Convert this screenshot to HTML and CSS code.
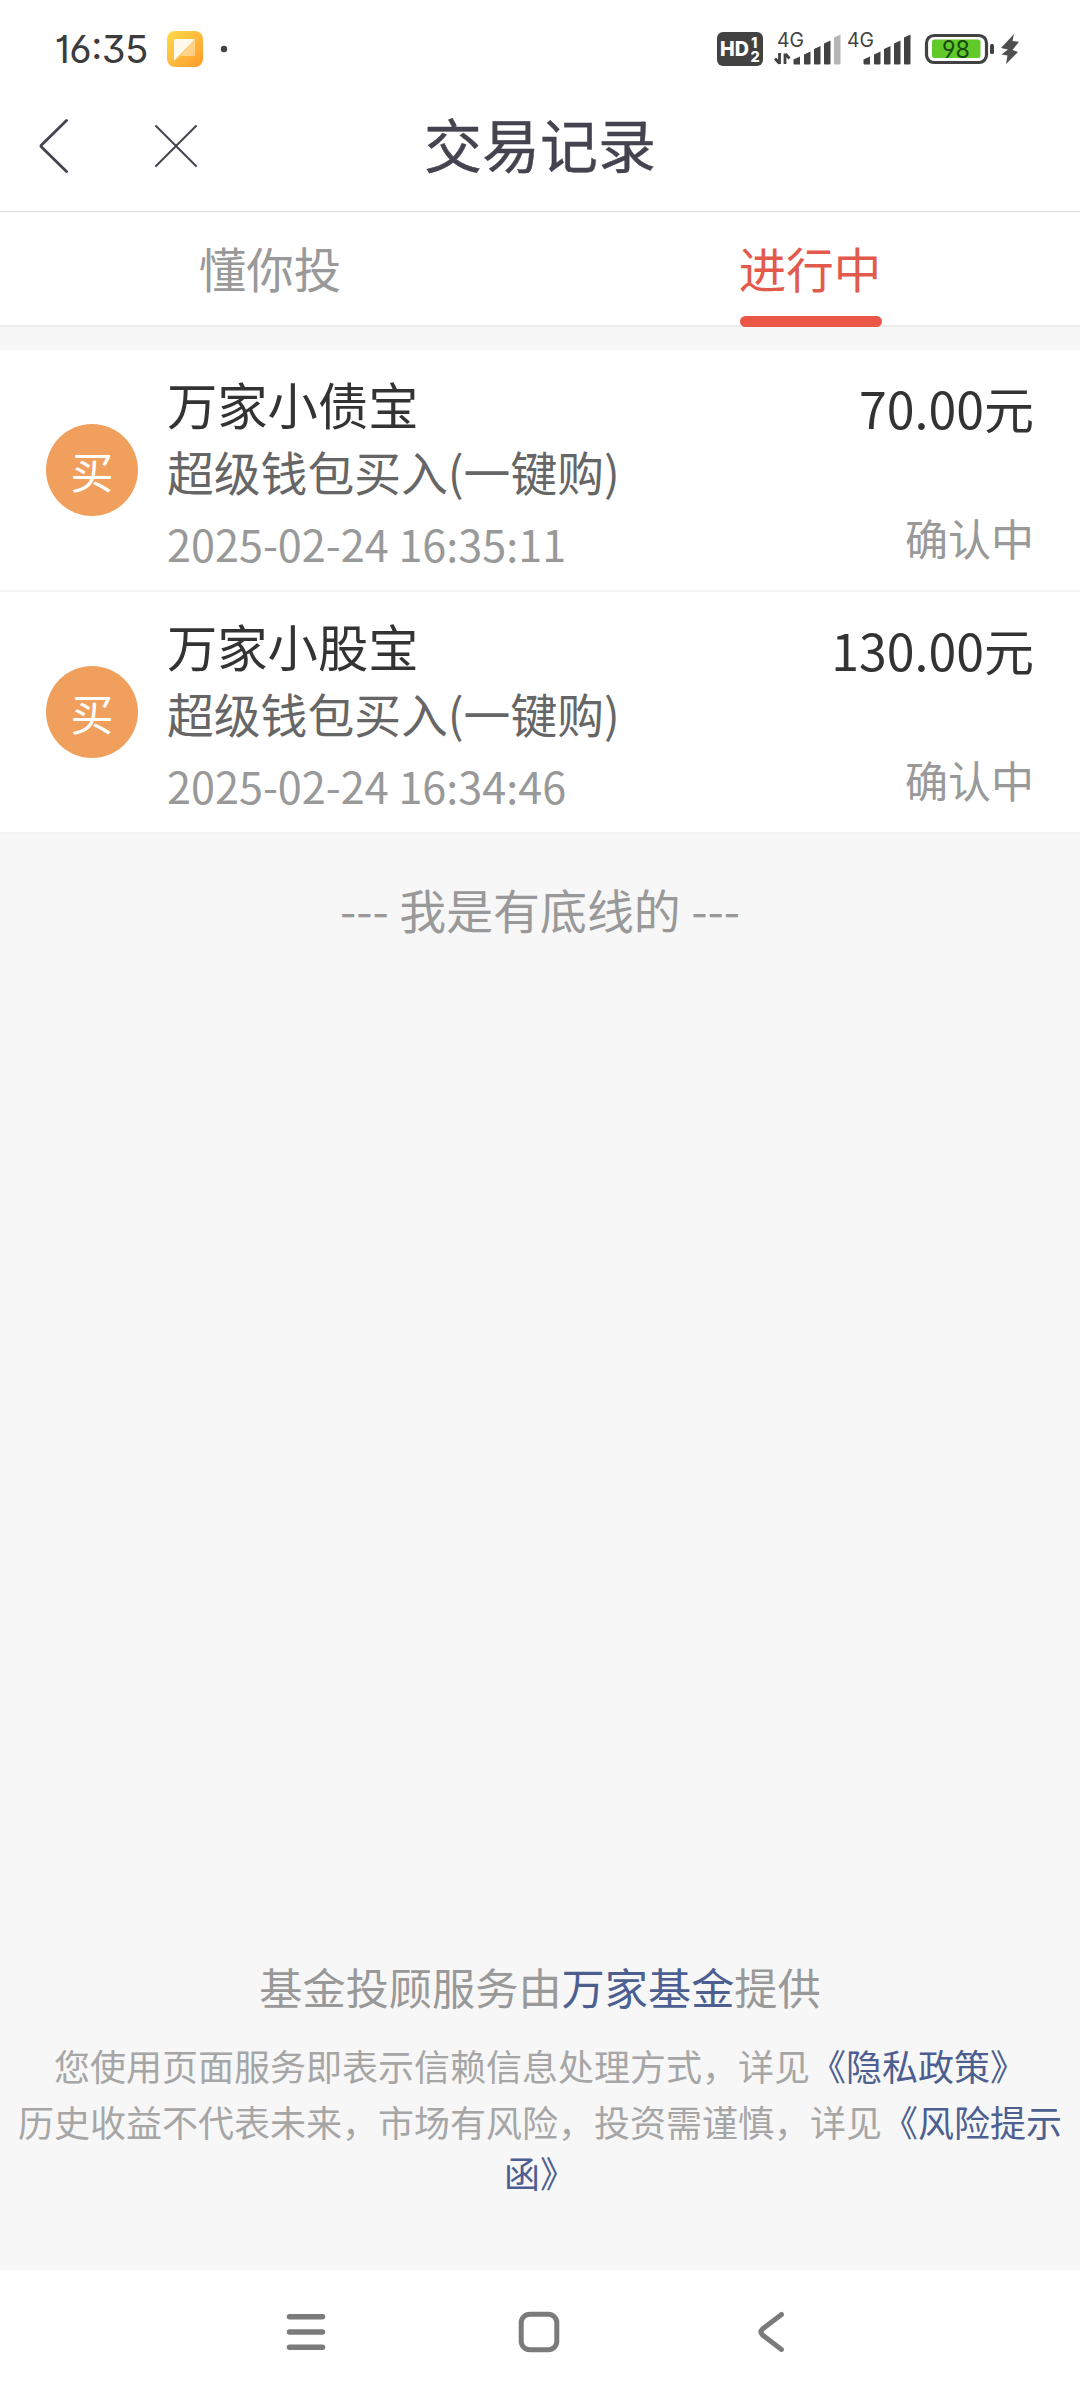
FILE: index.html
```html
<!DOCTYPE html>
<html lang="zh-CN">
<head>
<meta charset="utf-8">
<title>交易记录</title>
<link rel="stylesheet" href="styles.css">
</head>
<body>
<div class="screen">
  <div class="statusbar">
    <svg class="statusbar-art" width="1080" height="88" viewBox="0 0 1080 88">
      <defs>
        <linearGradient id="tile" x1="0" y1="0" x2="1" y2="1">
          <stop offset="0" stop-color="#fddb47"/>
          <stop offset="0.5" stop-color="#fdbb3c"/>
          <stop offset="1" stop-color="#fd9a2b"/>
        </linearGradient>
      </defs>
      <text class="clock" x="54.500" y="63" textLength="94" lengthAdjust="spacing">16:35</text>
      <rect x="167" y="31" width="36" height="36" rx="8" fill="url(#tile)"/>
      <path d="M195 39v15.500q0 1.500-1.500 1.500H180z" fill="#fff" fill-opacity="0.4"/>
      <path d="M175.500 39H195L174.500 60.500q-.5 0-.5-1V40.500q0-1.500 1.500-1.500z" fill="#fff8ec"/>
      <circle cx="224" cy="49" r="3.200" fill="#424242"/>

      <rect x="717" y="32" width="46" height="34" rx="6" fill="#424242"/>
      <text class="hd" x="720" y="56" textLength="29" lengthAdjust="spacingAndGlyphs">HD</text>
      <text class="hd-num" x="751" y="47.500">1</text>
      <text class="hd-num" x="750.500" y="61.500">2</text>

      <text class="net" x="777" y="47" textLength="27" lengthAdjust="spacingAndGlyphs">4G</text>
      <path d="M779.500 53v11M775 58.500l4.500 5M785 64V53.500M785.500 54l4 4.500" fill="none" stroke="#424242" stroke-width="2.800"/>
      <g fill="#424242">
        <path d="M793.500 59.500l6.500-3v8h-5.500q-1 0-1-1zM804 54.500l6.500-3v12q0 1-1 1H805q-1 0-1-1zM814 49l6.500-3v17.500q0 1-1 1H815q-1 0-1-1zM824 43.500l6.500-3v23q0 1-1 1H825q-1 0-1-1z"/>
        <path d="M834 37.500l6.500-3v29q0 1-1 1H835q-1 0-1-1z" fill="#b5b5b5"/>
        <path d="M863.500 59.500l6.500-3v8h-5.500q-1 0-1-1zM874 54.500l6.500-3v12q0 1-1 1H875q-1 0-1-1zM884 49l6.500-3v17.500q0 1-1 1H885q-1 0-1-1zM894 43.500l6.500-3v23q0 1-1 1H895q-1 0-1-1zM904 37.500l6.500-3v29q0 1-1 1H905q-1 0-1-1z"/>
      </g>
      <text class="net" x="847" y="47" textLength="27" lengthAdjust="spacingAndGlyphs">4G</text>

      <rect x="926.500" y="35.500" width="60" height="27" rx="7.500" fill="none" stroke="#424242" stroke-width="3.200"/>
      <rect x="932" y="39.500" width="48.500" height="18.500" rx="2.500" fill="#62c92b"/>
      <text class="charge" x="942" y="58" textLength="28" lengthAdjust="spacingAndGlyphs">98</text>
      <rect x="990" y="44" width="4" height="10" rx="1.500" fill="#424242"/>
      <path d="M1014 34L1001 48L1008 49.500L1001.500 54.500L1007.500 55.500L1006 64L1018 52L1012.500 50L1019 41.800L1012.500 41z" fill="#4f4f4f"/>
    </svg>
  </div>

  <header class="navbar">
    <div class="navbar-actions">
      <svg width="30" height="56" viewBox="0 0 30 56"><path d="M28.500 2.500L3.500 27Q2.500 28 3.500 29L28.500 53.500" fill="none" stroke="#44434f" stroke-width="2.800" stroke-linecap="round"/></svg>
      <svg width="44" height="44" viewBox="0 0 44 44"><path d="M2 2L42 42M42 2L2 42" fill="none" stroke="#44434f" stroke-width="2" stroke-linecap="round"/></svg>
    </div>
    <h1 class="navbar-title">交易记录</h1>
  </header>

  <nav class="tabs">
    <div class="tab"><span class="tab-label">懂你投</span></div>
    <div class="tab tab-active"><span class="tab-label">进行中</span></div>
  </nav>

  <main class="content">
    <ul class="records">
      <li class="record">
        <span class="badge">买</span>
        <div class="info">
          <div class="name">万家小债宝</div>
          <div class="kind">超级钱包买入(一键购)</div>
          <div class="time">2025-02-24 16:35:11</div>
        </div>
        <div class="result">
          <div class="amount">70.00元</div>
          <div class="state">确认中</div>
        </div>
      </li>
      <li class="record">
        <span class="badge">买</span>
        <div class="info">
          <div class="name">万家小股宝</div>
          <div class="kind">超级钱包买入(一键购)</div>
          <div class="time">2025-02-24 16:34:46</div>
        </div>
        <div class="result">
          <div class="amount">130.00元</div>
          <div class="state">确认中</div>
        </div>
      </li>
    </ul>
    <p class="end">--- 我是有底线的 ---</p>
    <footer class="legal">
      <p class="provider">基金投顾服务由<a class="link">万家基金</a>提供</p>
      <p class="note">您使用页面服务即表示信赖信息处理方式，详见<a class="link">《隐私政策》</a></p>
      <p class="note">历史收益不代表未来，市场有风险，投资需谨慎，详见<a class="link">《风险提示函》</a></p>
    </footer>
  </main>

  <div class="sysnav">
    <svg width="42" height="42" viewBox="0 0 42 42"><path d="M4.500 5.700H37.500M4.500 21H37.500M4.500 36.300H37.500" stroke="#7b7b7b" stroke-width="5.500" stroke-linecap="round"/></svg>
    <svg width="42" height="42" viewBox="0 0 42 42"><rect x="3.200" y="3.200" width="35.600" height="35.600" rx="8.500" fill="none" stroke="#7b7b7b" stroke-width="5"/></svg>
    <svg width="42" height="42" viewBox="0 0 42 42"><path d="M31.500 3.500L12.500 18Q9.500 21 12.500 24L31.500 38.500" fill="none" stroke="#7b7b7b" stroke-width="5" stroke-linecap="round" stroke-linejoin="round"/></svg>
  </div>
</div>
</body>
</html>
```
FILE: styles.css
```css
* {
  box-sizing: border-box;
  margin: 0;
  padding: 0;
}

body {
  background: #fff;
  font-family: "Noto Sans CJK SC", sans-serif;
  text-spacing-trim: space-all;
}

.screen {
  display: flex;
  flex-direction: column;
  width: 1080px;
  height: 2400px;
  background: #fff;
}

/* status bar */
.statusbar {
  height: 88px;
}

.statusbar-art {
  display: block;
}

.clock {
  font: 400 38.500px Inter, sans-serif;
  font-feature-settings: "cv01", "cv03", "cv09";
  fill: #3c3c3c;
}

.hd {
  font: 800 20.500px Inter, sans-serif;
  fill: #fff;
}

.hd-num {
  font: 800 14.500px Inter, sans-serif;
  fill: #fff;
}

.net {
  font: 400 20px Inter, sans-serif;
  fill: #424242;
}

.charge {
  font: 400 24px Inter, sans-serif;
  font-feature-settings: "cv04";
  fill: #174a0c;
}

/* title bar */
.navbar {
  display: grid;
  grid-template-columns: 200px 1fr 200px;
  align-items: center;
  height: 124px;
  padding-bottom: 7px;
  border-bottom: 1px solid #dcdcdc;
}

.navbar-actions {
  display: flex;
  align-items: center;
  justify-content: space-between;
  padding-left: 38px;
  padding-right: 2px;
}

.navbar-title {
  padding-bottom: 6px;
  text-align: center;
  font-size: 58px;
  line-height: 70px;
  font-weight: 400;
  -webkit-text-stroke: 0.4px #44434f;
  color: #44434f;
}

/* tabs */
.tabs {
  display: grid;
  grid-template-columns: 1fr 1fr;
  height: 115px;
  border-bottom: 2px solid #ececec;
}

.tab {
  display: flex;
  justify-content: center;
  color: #999;
}

.tab-label {
  position: relative;
  height: 115px;
  font-size: 47.500px;
  line-height: 112px;
}

.tab-active {
  color: #e25a4b;
}

.tab-active .tab-label::after {
  content: "";
  position: absolute;
  left: 1px;
  right: -1px;
  bottom: 0;
  height: 11px;
  border-radius: 6px;
  background: #ea5747;
}

/* list */
.content {
  display: flex;
  flex-direction: column;
  flex: 1;
  padding-top: 23px;
  background: #f7f7f7;
}

.records {
  list-style: none;
}

.record {
  display: flex;
  height: 242px;
  padding: 0 46px;
  background: #fff;
  border-bottom: 2px solid #f5f5f5;
}

.badge {
  width: 92px;
  height: 92px;
  margin-top: 74px;
  border-radius: 50%;
  background: #f19f5c;
  color: #fff;
  font-size: 43px;
  line-height: 92px;
  text-align: center;
}

.info {
  flex: 1;
  padding: 21px 0 0 29px;
}

.name {
  font-size: 50.300px;
  line-height: 64px;
  color: #333;
}

.kind {
  font-size: 46.800px;
  line-height: 71px;
  color: #666;
}

.time {
  font-size: 43.200px;
  line-height: 74px;
  color: #999;
}

.result {
  padding-top: 22px;
  text-align: right;
}

.amount {
  font-size: 50px;
  line-height: 71px;
  color: #333;
}

.state {
  padding-top: 64px;
  font-size: 43px;
  line-height: 60px;
  color: #999;
}

.end {
  padding-top: 45px;
  text-align: center;
  font-size: 46.900px;
  line-height: 60px;
  color: #999;
}

/* footer */
.legal {
  margin-top: auto;
  padding-bottom: 72px;
  text-align: center;
}

.provider {
  margin-bottom: 24px;
  font-size: 43.200px;
  line-height: 60px;
  color: #999;
}

.note {
  margin-bottom: 5px;
  padding: 0 10px;
  font-size: 36px;
  line-height: 51px;
  color: #a6a6a6;
}

.note:last-child {
  margin-bottom: 0;
}

.link {
  color: #4d5f91;
}

/* system navigation */
.sysnav {
  display: flex;
  justify-content: space-between;
  height: 130px;
  padding: 41px 288px 0 285px;
}
```
